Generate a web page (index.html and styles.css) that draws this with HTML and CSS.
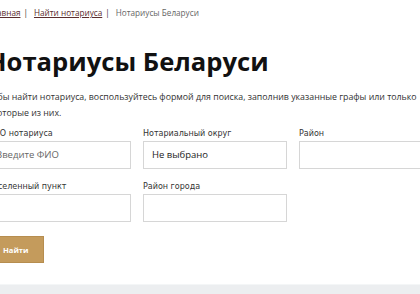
FILE: index.html
```html
<!DOCTYPE html>
<html lang="ru">
<head>
<meta charset="utf-8">
<link rel="stylesheet" href="styles.css">
</head>
<body>
<div class="page">
  <nav class="crumbs">
    <a class="crumb-home" href="#">Главная</a>
    <span class="sep">|</span>
    <a class="crumb-link" href="#">Найти нотариуса</a>
    <span class="sep">|</span>
    <span class="crumb-current">Нотариусы Беларуси</span>
  </nav>
  <h1 class="title">Нотариусы Беларуси</h1>
  <p class="intro">Чтобы найти нотариуса, воспользуйтесь формой для поиска, заполнив указанные графы или только некоторые из них.</p>
  <form class="form">
    <div class="grid">
      <label class="field">
        <span class="label">ФИО нотариуса</span>
        <span class="input placeholder">Введите ФИО</span>
      </label>
      <label class="field">
        <span class="label">Нотариальный округ</span>
        <span class="input">Не выбрано</span>
      </label>
      <label class="field">
        <span class="label">Район</span>
        <span class="input"></span>
      </label>
      <label class="field">
        <span class="label">Населенный пункт</span>
        <span class="input"></span>
      </label>
      <label class="field">
        <span class="label">Район города</span>
        <span class="input"></span>
      </label>
    </div>
    <button class="btn" type="button">Найти</button>
  </form>
</div>
<footer class="footer"></footer>
</body>
</html>
```
FILE: styles.css
```css
html, body {
  margin: 0;
  padding: 0;
  background: #fff;
  overflow: hidden;
}
body {
  font-family: "Open Sans", sans-serif;
  color: #222;
  width: 420px;
  height: 294px;
  display: flex;
  flex-direction: column;
}
.page {
  margin-left: -13px;
  width: 480px;
  flex: 1;
}
.crumbs {
  font-size: 8.2px;
  line-height: 14px;
  padding-top: 6px;
  margin-left: 1px;
  display: flex;
  white-space: nowrap;
}
.crumb-home,
.crumb-link {
  color: #5b2d2d;
  text-decoration: underline;
}
.sep {
  color: #333;
  padding: 0 6px 0 3px;
}
.crumb-current {
  color: #666;
}
.title {
  margin: 27px 0 0;
  font-size: 25.6px;
  line-height: 30px;
  font-weight: 700;
  color: #111;
  white-space: nowrap;
}
.intro {
  margin: 12px 0 0 -5px;
  width: 465px;
  font-size: 8.8px;
  line-height: 16px;
  color: #333;
}
.form {
  margin-top: 6px;
}
.grid {
  display: grid;
  grid-template-columns: 144px 144px 144px;
  column-gap: 12px;
  row-gap: 11px;
}
.field {
  display: flex;
  flex-direction: column;
  gap: 1px;
}
.label {
  font-family: "DejaVu Sans", sans-serif;
  font-size: 8px;
  line-height: 13px;
  color: #333;
  white-space: nowrap;
}
.input {
  box-sizing: border-box;
  height: 28px;
  border: 1px solid #d6d6d6;
  font-size: 9.5px;
  line-height: 26px;
  padding-left: 8px;
  color: #222;
}
.placeholder {
  color: #666;
}
.btn {
  display: block;
  margin-top: 14px;
  height: 27px;
  padding: 0 14px 0 15px;
  background: #c49b5c;
  border: 1px solid #b68d4f;
  color: #fff;
  font-family: inherit;
  font-size: 7.6px;
  font-weight: 700;
  cursor: pointer;
}
.footer {
  height: 9px;
  border-top: 1px solid #f4f6f7;
  background: #eceef0;
}
```
